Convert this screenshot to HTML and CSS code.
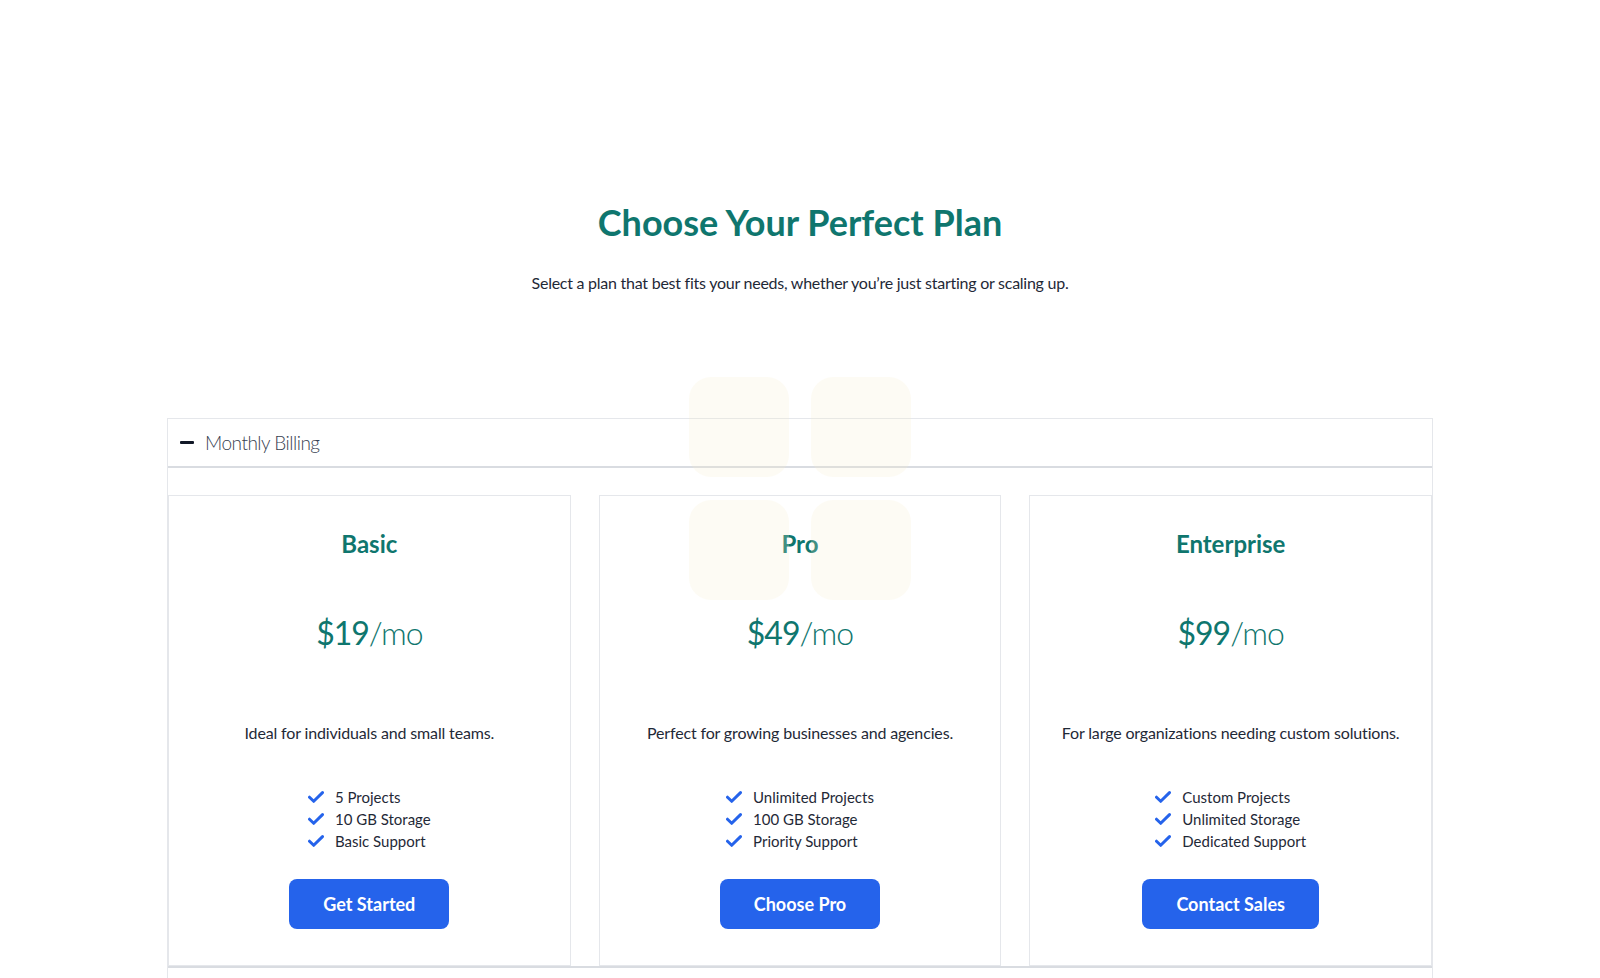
FILE: index.html
```html
<!DOCTYPE html>
<html lang="en">
<head>
<meta charset="utf-8">
<title>Choose Your Perfect Plan</title>
<link rel="stylesheet" href="styles.css">
</head>
<body>
<main class="page">
  <div class="deco" aria-hidden="true">
    <span></span><span></span><span></span><span></span>
  </div>
  <h1 class="title">Choose Your Perfect Plan</h1>
  <p class="subtitle">Select a plan that best fits your needs, whether you’re just starting or scaling up.</p>

  <section class="accordion">
    <div class="acc-item">
      <div class="acc-header">
        <span class="minus"></span>
        <span class="acc-label">Monthly Billing</span>
      </div>
      <div class="acc-panel">
        <div class="cards">
          <article class="card">
            <h2 class="plan">Basic</h2>
            <div class="price"><span class="amount">$19</span><span class="per">/mo</span></div>
            <p class="desc">Ideal for individuals and small teams.</p>
            <ul class="features">
              <li><svg class="check" viewBox="0 0 16 12"><path d="M1.5 6.2l4.2 4.1L14.5 1.6"/></svg>5 Projects</li>
              <li><svg class="check" viewBox="0 0 16 12"><path d="M1.5 6.2l4.2 4.1L14.5 1.6"/></svg>10 GB Storage</li>
              <li><svg class="check" viewBox="0 0 16 12"><path d="M1.5 6.2l4.2 4.1L14.5 1.6"/></svg>Basic Support</li>
            </ul>
            <button class="btn">Get Started</button>
          </article>
          <article class="card">
            <h2 class="plan">Pro</h2>
            <div class="price"><span class="amount">$49</span><span class="per">/mo</span></div>
            <p class="desc">Perfect for growing businesses and agencies.</p>
            <ul class="features">
              <li><svg class="check" viewBox="0 0 16 12"><path d="M1.5 6.2l4.2 4.1L14.5 1.6"/></svg>Unlimited Projects</li>
              <li><svg class="check" viewBox="0 0 16 12"><path d="M1.5 6.2l4.2 4.1L14.5 1.6"/></svg>100 GB Storage</li>
              <li><svg class="check" viewBox="0 0 16 12"><path d="M1.5 6.2l4.2 4.1L14.5 1.6"/></svg>Priority Support</li>
            </ul>
            <button class="btn">Choose Pro</button>
          </article>
          <article class="card">
            <h2 class="plan">Enterprise</h2>
            <div class="price"><span class="amount">$99</span><span class="per">/mo</span></div>
            <p class="desc">For large organizations needing custom solutions.</p>
            <ul class="features">
              <li><svg class="check" viewBox="0 0 16 12"><path d="M1.5 6.2l4.2 4.1L14.5 1.6"/></svg>Custom Projects</li>
              <li><svg class="check" viewBox="0 0 16 12"><path d="M1.5 6.2l4.2 4.1L14.5 1.6"/></svg>Unlimited Storage</li>
              <li><svg class="check" viewBox="0 0 16 12"><path d="M1.5 6.2l4.2 4.1L14.5 1.6"/></svg>Dedicated Support</li>
            </ul>
            <button class="btn">Contact Sales</button>
          </article>
        </div>
      </div>
    </div>
    <div class="acc-item next"></div>
  </section>
</main>
</body>
</html>
```
FILE: styles.css
```css
* { box-sizing: border-box; }

html, body {
  margin: 0;
  padding: 0;
  background: #ffffff;
}

body {
  font-family: "Lato", "Noto Sans", sans-serif;
  color: #1f2937;
  overflow: hidden;
}

.page {
  position: relative;
  padding-top: 202px;
  text-align: center;
}

.deco {
  position: absolute;
  top: 377px;
  left: calc(50% - 111px);
  display: grid;
  grid-template-columns: 100px 100px;
  grid-auto-rows: 100px;
  gap: 23px 22px;
  pointer-events: none;
  z-index: 2;
}

.deco span {
  display: block;
  border-radius: 22px;
  background: rgba(245, 238, 205, 0.22);
}

.title {
  margin: 0;
  font-size: 36px;
  line-height: 40px;
  font-weight: 700;
  color: #0f766e;
}

.subtitle {
  margin: 29px 0 0;
  font-size: 16px;
  line-height: 24px;
  letter-spacing: -0.25px;
  color: #1f2937;
}

.accordion {
  width: 1266px;
  margin: 123px auto 0;
  border: 1px solid #e5e7eb;
  border-bottom: none;
  text-align: left;
}

.acc-header {
  height: 49px;
  display: flex;
  align-items: center;
  gap: 11px;
  padding: 0 12px;
  border-bottom: 2px solid #d9dce1;
}

.minus {
  display: block;
  width: 14px;
  height: 3px;
  background: #111827;
  border-radius: 1px;
}

.acc-label {
  font-size: 19px;
  font-weight: 300;
  letter-spacing: -0.5px;
  color: #374151;
}

.acc-panel {
  padding-top: 27px;
  border-bottom: 2px solid #d9dce1;
}

.cards {
  display: grid;
  grid-template-columns: repeat(3, 1fr);
  gap: 28px;
}

.card {
  border: 1px solid #e5e7eb;
  display: flex;
  flex-direction: column;
  align-items: center;
  text-align: center;
  padding: 32px 24px 36px;
}

.plan {
  margin: 0;
  font-size: 24px;
  line-height: 32px;
  font-weight: 700;
  color: #0f766e;
}

.price {
  margin-top: 53px;
  line-height: 40px;
  color: #0f766e;
  font-size: 32px;
  letter-spacing: -1px;
}

.amount { font-weight: 400; }
.per { font-weight: 300; }

.desc {
  margin: 68px 0 0;
  font-size: 16px;
  line-height: 24px;
  letter-spacing: -0.15px;
  color: #1f2937;
}

.features {
  list-style: none;
  margin: 41px 0 0;
  padding: 0;
  display: flex;
  flex-direction: column;
  align-items: flex-start;
}

.features li {
  display: flex;
  align-items: center;
  gap: 11px;
  height: 22px;
  font-size: 15px;
  color: #1f2937;
}

.check {
  width: 16px;
  height: 12px;
  fill: none;
  stroke: #2563eb;
  stroke-width: 3;
  stroke-linecap: round;
  stroke-linejoin: round;
}

.btn {
  margin-top: 27px;
  height: 50px;
  padding: 0 34px;
  border: none;
  border-radius: 8px;
  background: #2563eb;
  color: #ffffff;
  font-family: inherit;
  font-size: 18px;
  font-weight: 700;
  cursor: pointer;
}

.acc-item.next {
  height: 40px;
}
```
